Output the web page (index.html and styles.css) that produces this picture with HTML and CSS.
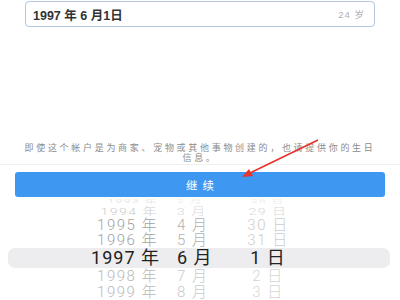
FILE: index.html
```html
<!DOCTYPE html>
<html lang="zh-CN">
<head>
    <meta charset="UTF-8">
    <meta name="viewport" content="width=device-width, initial-scale=1.0">
    <title>生日</title>
    <link rel="stylesheet" href="styles.css">
</head>
<body>

    <!-- Birthday field -->
    <div class="field">
        <span class="field-value">1997 年 6 月1日</span>
        <span class="field-age">24 岁</span>
    </div>

    <p class="note">即使这个帐户是为商家、宠物或其他事物创建的，也请提供你的生日信息。</p>
    <div class="divider"></div>

    <button class="btn">继续</button>

    <!-- Date picker wheel -->
    <div class="picker">
        <div class="row edge"><span class="y">1993 年</span><span class="m">2 月</span><span class="d">28 日</span></div>
        <div class="row far"><span class="y">1994 年</span><span class="m">3 月</span><span class="d">29 日</span></div>
        <div class="row near"><span class="y">1995 年</span><span class="m">4 月</span><span class="d">30 日</span></div>
        <div class="row near"><span class="y">1996 年</span><span class="m">5 月</span><span class="d">31 日</span></div>
        <div class="row sel"><span class="y">1997 年</span><span class="m">6 月</span><span class="d">1 日</span></div>
        <div class="row near low"><span class="y">1998 年</span><span class="m">7 月</span><span class="d">2 日</span></div>
        <div class="row near low"><span class="y">1999 年</span><span class="m">8 月</span><span class="d">3 日</span></div>
    </div>

    <!-- Red annotation arrow -->
    <svg class="arrow" width="400" height="300" viewBox="0 0 400 300">
        <line x1="318" y1="140" x2="250" y2="173" stroke="#e8342c" stroke-width="1.6"/>
        <polygon points="242,177 249,169 253,176" fill="#e8342c"/>
    </svg>

</body>
</html>
```

FILE: styles.css
```css
body {
    margin: 0;
    background: #fff;
    font-family: "Liberation Sans", "Noto Sans CJK SC", sans-serif;
    position: relative;
    width: 400px;
    height: 300px;
    overflow: hidden;
}
.field {
    box-sizing: border-box;
    height: 26px;
    margin: 1px 25px 0 25px;
    padding: 0 9px 0 7px;
    border: 1px solid #b3c6de;
    border-radius: 4px;
    display: flex;
    align-items: center;
    justify-content: space-between;
}
.field-value {
    font-size: 12.5px;
    font-weight: bold;
    color: #333;
}
.field-age {
    font-size: 9.5px;
    color: #b0b0b0;
    letter-spacing: 1px;
}
.note {
    margin: 117px 22px 0 22px;
    font-size: 9px;
    line-height: 9.5px;
    letter-spacing: 2.7px;
    color: #8c8c8c;
    text-align: center;
}
.divider {
    height: 1px;
    margin-top: 1px;
    background: #f0f0f0;
}
.btn {
    display: block;
    box-sizing: border-box;
    width: 370px;
    height: 25px;
    margin: 7px 15px 0 15px;
    border: none;
    border-radius: 3px;
    background: #3e97f1;
    color: #fff;
    font-family: inherit;
    font-size: 11.5px;
    letter-spacing: 5px;
    padding: 0 0 0 5px;
}
.picker {
    margin-top: 1px;
    font-family: Roboto, "Liberation Sans", "Noto Sans CJK SC", sans-serif;
    font-weight: 300;
}
.row {
    display: flex;
    align-items: center;
    font-size: 15px;
    line-height: 15px;
    height: 15px;
    color: #a2a2a2;
}
.row span {
    display: block;
    white-space: nowrap;
}
.y {
    width: 158px;
    text-align: right;
    letter-spacing: 1.5px;
}
.m {
    width: 62px;
    padding-left: 19px;
    letter-spacing: 1.5px;
}
.d {
    width: 58px;
    text-align: center;
    letter-spacing: 1.5px;
}
.row .m {
    color: #b0b0b0;
}
.row .d {
    color: #cdcdcd;
}
.edge {
    height: 6px;
    line-height: 6px;
    font-size: 12px;
    color: #e2e2e2;
    transform: scaleY(0.4);
}
.edge .m, .edge .d {
    color: #e8e8e8;
}
.far {
    height: 14px;
    line-height: 14px;
    font-size: 14px;
    color: #cbcbcb;
    transform: scaleY(0.7);
}
.far .m, .far .d {
    color: #d8d8d8;
}
.sel {
    height: 20px;
    line-height: 20px;
    margin: 0 10px 0 8px;
    border-radius: 7px;
    background: #ededef;
    font-size: 18px;
    font-weight: 400;
    color: #222;
}
.sel .y {
    width: 152px;
    letter-spacing: 1px;
}
.sel .m {
    padding-left: 17px;
    letter-spacing: 1px;
}
.sel .d {
    letter-spacing: 1px;
}
.sel .m, .sel .d {
    color: #222;
}
.low {
    height: 16px;
    line-height: 16px;
    color: #b9b9b9;
}
.low .m {
    color: #cacaca;
}
.low .d {
    color: #d4d4d4;
}
.arrow {
    position: absolute;
    left: 0;
    top: 0;
    pointer-events: none;
}
```
